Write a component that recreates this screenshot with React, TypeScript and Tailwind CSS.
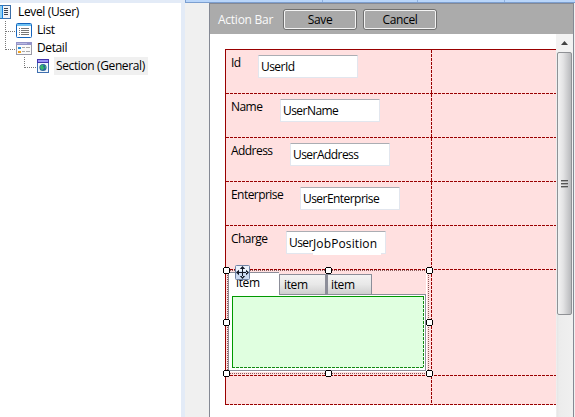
import type { ReactNode } from "react";

const dashH =
  "h-px bg-[repeating-linear-gradient(90deg,#990000_0px,#990000_3px,#ffe0e0_3px,#ffe0e0_4px)]";
const dashV =
  "w-px bg-[repeating-linear-gradient(180deg,#990000_0px,#990000_3px,#ffe0e0_3px,#ffe0e0_4px)]";
const dotH =
  "h-px bg-[repeating-linear-gradient(90deg,#8a5c5c_0px,#8a5c5c_1px,#ffe0e0_1px,#ffe0e0_2px)]";
const dotV =
  "w-px bg-[repeating-linear-gradient(180deg,#8a5c5c_0px,#8a5c5c_1px,#ffe0e0_1px,#ffe0e0_2px)]";

function Row({ height, children }: { height: string; children?: ReactNode }) {
  return (
    <>
      <div className={`flex ${height}`}>
        <div className="w-[205px] shrink-0">{children}</div>
        <div className={`shrink-0 ${dashV}`} />
      </div>
      <div className={dashH} />
    </>
  );
}

function Field({ label, gap, children }: { label: string; gap: string; children: ReactNode }) {
  return (
    <Row height="h-[43px]">
      <div className="flex pl-[5px] pt-[5px]">
        <span className={`h-4 shrink-0 leading-4 ${gap}`}>{label}</span>
        <div className="h-[23px] w-[100px] rounded-[1px] border border-[#e2e6ee] border-t-[#abadb3] bg-white pl-[2px] leading-[21px]">
          {children}
        </div>
      </div>
    </Row>
  );
}

function BarButton({ label }: { label: string }) {
  return (
    <div className="h-[21px] w-[74px] rounded-[3px] border border-[#707070] bg-[#a9a9a9] text-center tracking-[-0.35px]">
      <div className="h-full rounded-[2px] border border-[#f4f4f4] leading-[18px]">{label}</div>
    </div>
  );
}

function Handle({ at }: { at: string }) {
  return (
    <svg className={`absolute size-[7px] ${at}`} viewBox="0 0 7 7" shapeRendering="crispEdges">
      <path d="M1 1h5v5H1z" fill="#fff" />
      <path d="M1 0h5v1H1zM1 6h5v1H1zM0 1h1v5H0zM6 1h1v5H6z" fill="#000" />
    </svg>
  );
}

function MoveGrip() {
  return (
    <svg className="absolute left-[9px] top-[-5px] size-[15px]" viewBox="0 0 15 15">
      <rect x=".5" y=".5" width="14" height="14" rx="1" fill="#cbdaf2" stroke="#7183a5" />
      <path d="M1 1h13v5H1z" fill="#edf3fc" />
      <path
        d="M7 3h1v4h4v1H8v4H7V8H3V7h4zM7.5 1 10.200 4H4.800zM7.500 14 10.200 11H4.800zM1 7.500 4 4.800v5.400zM14 7.500 11 4.800v5.400z"
        fill="#141a28"
      />
    </svg>
  );
}

function TabsControl() {
  return (
    <div className="relative h-[105px] w-[205px] tracking-[-0.35px]">
      <div className={`w-[203px] ${dotH}`} />
      <div className="flex h-[102px]">
        <div className={`ml-px ${dotV}`} />
        <div className="mt-px h-[100px] w-[198px]">
          <div className="flex h-[22px] items-end">
            <div className="h-[22px] w-[51px] border-l border-t border-[#8c8e99] bg-white pl-[7px] leading-[20px]">
              item
            </div>
            <div className="h-5 w-[47px] border border-b-0 border-[#8c8e99] bg-linear-to-b from-[#f3f3f3] via-[#e8e8e8] via-50% to-[#cfcfcf] pl-1 leading-[20px]">
              item
            </div>
            <div className="ml-px h-5 w-[46px] -translate-x-px border border-b-0 border-l-2 border-[#8c8e99] bg-linear-to-b from-[#f3f3f3] via-[#e8e8e8] via-50% to-[#cfcfcf] pl-[3px] leading-[20px]">
              item
            </div>
          </div>
          <div className="flex h-px">
            <div className="w-px bg-[#8c8e99]" />
            <div className="w-[50px] bg-white" />
            <div className="w-[147px] bg-[#8c8e99]" />
          </div>
          <div className="h-[76px] border border-t-0 border-[#8c8e99] bg-white pl-[3px] pr-px pt-px">
            <div className="flex h-[71px] border-l border-t border-[#009900] bg-[#e0ffe0]">
              <div className="grow" />
              <div className="w-px bg-[repeating-linear-gradient(180deg,#128812_0px,#128812_3px,#e0ffe0_3px,#e0ffe0_4px)]" />
            </div>
            <div className="h-px bg-[repeating-linear-gradient(90deg,#128812_0px,#128812_3px,#e0ffe0_3px,#e0ffe0_4px)]" />
          </div>
          <div className="h-px bg-white" />
        </div>
        <div className="mt-px h-[100px] w-px bg-white" />
        <div className={`ml-px ${dotV}`} />
      </div>
      <div className={`w-[203px] ${dotH}`} />
      <Handle at="left-[-3px] top-[-3px]" />
      <Handle at="left-[99px] top-[-3px]" />
      <Handle at="left-[200px] top-[-3px]" />
      <Handle at="left-[-3px] top-[49px]" />
      <Handle at="left-[200px] top-[49px]" />
      <Handle at="left-[-3px] top-[100px]" />
      <Handle at="left-[99px] top-[100px]" />
      <Handle at="left-[200px] top-[100px]" />
      <MoveGrip />
    </div>
  );
}

function LevelIcon() {
  return (
    <svg className="h-[14px] w-[11px] shrink-0" viewBox="0 0 11 14" shapeRendering="crispEdges">
      <path d="M0 0h11v14H0z" fill="#3b6ea8" />
      <path d="M0 1h2v12H0z" fill="#8fd0f5" />
      <path d="M2 0h1v14H2z" fill="#1580e0" />
      <path d="M3 1h7v12H3z" fill="#f0f3f8" />
      <path d="M4 3h4v1H4zM4 5h4v1H4zM4 7h4v1H4zM4 9h4v1H4z" fill="#3c4450" />
    </svg>
  );
}

function ListIcon() {
  return (
    <svg className="h-[15px] w-4 shrink-0" viewBox="0 0 16 15">
      <rect x=".5" y=".5" width="15" height="14" rx="1" fill="#fff" stroke="#1464bd" />
      <path d="M1 1h14v2H1z" fill="#6fc2f2" />
      <path d="M3 5h1v1H3zM5 5h8v1H5zM3 7h1v1H3zM5 7h8v1H5zM3 9h1v1H3zM5 9h8v1H5zM3 11h1v1H3zM5 11h8v1H5z" fill="#777" />
    </svg>
  );
}

function DetailIcon() {
  return (
    <svg className="h-[13px] w-4 shrink-0" viewBox="0 0 16 13" shapeRendering="crispEdges">
      <path d="M0 0h16v13H0z" fill="#9a9aa6" />
      <path d="M0 0h16v3H0z" fill="#9393c8" />
      <path d="M1 1h10v1H1z" fill="#b9b9e2" />
      <path d="M1 3h14v9H1z" fill="#fafafa" />
      <path d="M2 5h3v2H2z" fill="#288ed8" />
      <path d="M2 9h3v2H2z" fill="#f2a01c" />
      <path d="M6 5h3v1H6zM10 5h4v1h-4zM6 9h3v1H6zM10 9h4v1h-4z" fill="#a9a9a9" />
    </svg>
  );
}

function SectionIcon() {
  return (
    <svg className="h-[14px] w-3 shrink-0" viewBox="0 0 12 14">
      <path d="M0 0h12v14H0z" fill="#3f6fb0" />
      <path d="M0 0h12v4H0z" fill="#4334ad" />
      <path d="M1 1h10v2H1z" fill="#9b94f5" />
      <path d="M1 4h10v9H1z" fill="#f2f7fb" />
      <circle cx="6" cy="8.5" r="3.6" fill="#2c669c" />
      <path d="M3 7.5c1-2 3-2 3.600-1.500l-.6 1.500 1.500 1.500-2 2C4 11 3 9 3 7.500zM8 6l1 1v2l-1 .5z" fill="#35b56c" />
    </svg>
  );
}

function Tree() {
  return (
    <div className="relative h-[414px] w-[181px] bg-white">
      <svg className="absolute left-0 top-0 h-[70px] w-10" viewBox="0 0 40 70" shapeRendering="crispEdges">
        <path d="M5.500 18v28.500M5.500 28.500H16M5.500 46.500H16M24.500 54v10.500M24.500 64.500H36" fill="none" stroke="#777" strokeDasharray="1 1" />
      </svg>
      <div className="flex h-[18px] items-center leading-[18px]">
        <LevelIcon />
        <span className="ml-[7px] tracking-[-0.35px]">Level (User)</span>
      </div>
      <div className="flex h-[18px] items-center pl-4 leading-[18px]">
        <ListIcon />
        <span className="ml-[5px] tracking-[-0.4px]">List</span>
      </div>
      <div className="flex h-[18px] items-center pl-4 leading-[18px]">
        <DetailIcon />
        <span className="ml-[5px] tracking-[-0.4px]">Detail</span>
      </div>
      <div className="flex h-[18px] items-center pl-[37px] leading-[18px]">
        <SectionIcon />
        <span className="ml-[5px] w-[94px] whitespace-nowrap bg-[#f0f0f0] pl-[2px] tracking-[-0.38px]">
          Section (General)
        </span>
      </div>
    </div>
  );
}

function Scrollbar() {
  return (
    <div className="h-[383px] w-[17px] bg-[linear-gradient(90deg,#f6f6f6_0px,#e5e5e5_1px,#ececec_3px,#f0f0f0_17px)]">
      <div className="flex h-[18px] items-center justify-center bg-[#f2f2f2]">
        <svg className="h-1 w-[7px]" viewBox="0 0 7 4">
          <path d="M3.500 0 7 4H0z" fill="#444" />
        </svg>
      </div>
      <div className="ml-px flex h-[263px] w-[15px] flex-col items-center justify-center gap-px rounded-[2px] border border-[#8f9195] bg-linear-to-r from-[#f3f3f3] via-[#e3e3e4] via-40% to-[#b9babd]">
        <div className="h-[2px] w-[7px] border-t border-[#555] bg-[#aaa]" />
        <div className="h-[2px] w-[7px] border-t border-[#555] bg-[#aaa]" />
        <div className="h-[2px] w-[7px] border-t border-[#555] bg-[#aaa]" />
      </div>
    </div>
  );
}

export default function App() {
  return (
    <div className="flex h-[417px] w-[575px] overflow-hidden bg-[#e3ebf7] font-['Open_Sans','Noto_Sans',sans-serif] text-[12px] text-black">
      <div className="w-[185px] shrink-0 pt-[3px]">
        <Tree />
      </div>
      <div className="w-[390px] bg-[#f0f0f0]">
        <div className="flex h-[3px] border-b border-l border-[#7c9fd0] bg-[#b9d6fb]">
          <div className="w-[137px] border-r border-[#8fb0df]" />
          <div className="w-[95px] border-r border-[#8fb0df]" />
          <div className="w-[87px] border-r border-[#8fb0df]" />
        </div>
        <div className="ml-6 h-[414px] w-[365px] border-x border-t border-[#858994] bg-white">
          <div className="flex h-[30px] items-start bg-[#ababab] pl-2 pt-[5px]">
            <span className="w-[65px] leading-[21px] tracking-[-0.25px] text-[#fafafa]">Action Bar</span>
            <div className="flex gap-[6px]">
              <BarButton label="Save" />
              <BarButton label="Cancel" />
            </div>
          </div>
          <div className="flex">
            <div className="w-[346px] pl-[15px] pt-[15px] tracking-[-0.55px]">
              <div className="border-l border-t border-[#990000] bg-[#ffe0e0]">
                <Field label="Id" gap="w-[27px]">UserId</Field>
                <Field label="Name" gap="w-[49px]">UserName</Field>
                <Field label="Address" gap="w-[59px]">UserAddress</Field>
                <Field label="Enterprise" gap="w-[69px]">UserEnterprise</Field>
                <Field label="Charge" gap="w-[55px]">
                  <div className="flex">
                    <span className="w-6">User</span>
                    <span className="h-[23px] w-[68px] bg-white leading-[23px] tracking-[0.12px]">JobPosition</span>
                  </div>
                </Field>
                <Row height="h-[105px]">
                  <TabsControl />
                </Row>
                <Row height="h-[28px]" />
              </div>
            </div>
            <Scrollbar />
          </div>
        </div>
      </div>
    </div>
  );
}
